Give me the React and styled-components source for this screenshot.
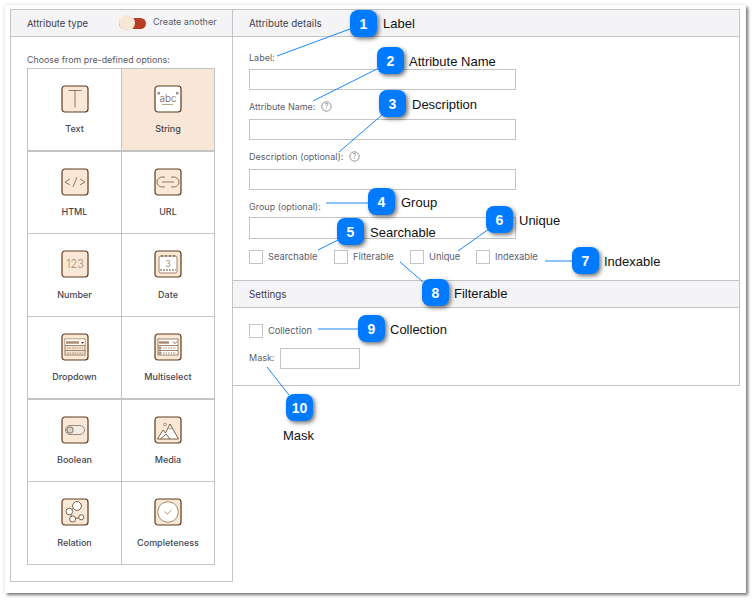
import React from "react"
import styled, { createGlobalStyle } from "styled-components"

const GlobalStyle = createGlobalStyle`
  html, body { margin: 0; padding: 0; background: #fff; }
  body { font-family: "Inter", "Liberation Sans", sans-serif; }
`

const Page = styled.div`
  position: relative;
  width: 754px;
  height: 602px;
  overflow: hidden;
  background: #fff;
`

const Sheet = styled.div`
  display: flex;
  align-items: flex-start;
  box-sizing: border-box;
  width: 741px;
  height: 588px;
  margin: 5px 0 0 5px;
  padding: 4px 0 0 5px;
  background: #fff;
  box-shadow: 2px 2px 3px rgba(0, 0, 0, 0.55), -1px -1px 3px rgba(0, 0, 0, 0.08);
`

const LeftPanel = styled.section`
  box-sizing: border-box;
  width: 223px;
  height: 573px;
  border: 1px solid #c4c4c4;
`

const RightPanel = styled.section`
  box-sizing: border-box;
  width: 508px;
  height: 377px;
  margin-left: -1px;
  border: 1px solid #c4c4c4;
`

const PanelHeader = styled.header`
  display: flex;
  align-items: center;
  box-sizing: border-box;
  height: ${p => p.$h || 27}px;
  margin-top: ${p => p.$mt || 0}px;
  padding-left: 16px;
  background: #f4f4f6;
  border-bottom: 1px solid #c4c4c4;
  border-top: ${p => (p.$ruled ? "1px solid #c4c4c4" : "0")};
  font-size: ${p => p.$size || 9.8}px;
  color: #3d3d4d;
`

const Toggle = styled.span`
  position: relative;
  width: 27px;
  height: 11px;
  margin-left: 31px;
  border-radius: 6px;
  background: #b83c22;
  &::before {
    content: "";
    position: absolute;
    left: 0;
    top: -3px;
    width: 16px;
    height: 16px;
    border-radius: 50%;
    background: #f8e7d6;
  }
`

const ToggleText = styled.span`
  margin: -3px 0 0 7px;
  font-size: 9px;
  color: #5a5a68;
`

const LeftBody = styled.div`
  padding: 16px 16px 0;
`

const Hint = styled.div`
  height: 15px;
  font-size: 8.9px;
  line-height: 13px;
  color: #5a5a68;
`

const TypeGrid = styled.div`
  display: grid;
  grid-template-columns: 94px 92px;
  grid-template-rows: 83px 82px 83px 83px 82px 83px;
  box-sizing: border-box;
  width: 188px;
  border: 1px solid #c4c4c4;
  border-bottom: 0;
`

const TypeCell = styled.div`
  display: flex;
  flex-direction: column;
  align-items: center;
  box-sizing: border-box;
  padding-top: 16px;
  background: ${p => (p.$active ? "#f8e7d6" : "#fff")};
  border-bottom: ${p => (p.$heavy ? 2 : 1)}px solid #c4c4c4;
  border-right: ${p => (p.$last ? 0 : 1)}px solid #c4c4c4;
  font-size: 9px;
  font-weight: 500;
  color: #45454f;
`

const TypeName = styled.span`
  margin-top: ${p => (p.$low ? 1 : 0)}px;
`

const IconBox = styled.svg`
  display: block;
  width: 28px;
  height: 28px;
  margin-bottom: 10px;
`

const Form = styled.div`
  padding: 12px 16px 0;
`

const FieldLabel = styled.label`
  display: flex;
  align-items: center;
  gap: 6px;
  height: 16px;
  font-size: 9px;
  color: #5e5e6a;
`

const TextInput = styled.div`
  box-sizing: border-box;
  width: 267px;
  height: ${p => p.$h || 21}px;
  margin: ${p => p.$before || 5}px 0 ${p => p.$after || 8}px;
  border: 1px solid #c4c4c4;
  background: #fff;
`

const CheckRow = styled.div`
  display: flex;
  align-items: center;
  height: 14px;
`

const CheckItem = styled.span`
  display: flex;
  align-items: center;
  gap: 5px;
  width: ${p => p.$w}px;
  font-size: 9.3px;
  color: #5a6070;
`

const CheckText = styled.span`
  margin-top: -1px;
`

const CheckBox = styled.span`
  box-sizing: border-box;
  width: 14px;
  height: 14px;
  border: 1px solid #c4c4c4;
  background: #fff;
`

const SettingsBody = styled.div`
  padding: 16px 16px 0;
`

const MaskRow = styled.div`
  display: flex;
  gap: 6px;
  margin-top: 10px;
  font-size: 9px;
  color: #5e5e6a;
  line-height: 20px;
`

const MaskInput = styled.div`
  box-sizing: border-box;
  width: 80px;
  height: 21px;
  border: 1px solid #c4c4c4;
`

const LeaderLines = styled.svg`
  position: absolute;
  left: 0;
  top: 0;
  pointer-events: none;
`

const Badge = styled.div`
  position: absolute;
  left: ${p => p.$x}px;
  top: ${p => p.$y}px;
  display: flex;
  align-items: center;
  justify-content: center;
  width: 27px;
  height: 27px;
  border-radius: 8px;
  background: #007bff;
  box-shadow: 2px 2px 4px rgba(0, 0, 0, 0.55);
  font-family: "Liberation Sans", Arial, sans-serif;
  font-size: 14px;
  font-weight: 700;
  color: #fff;
`

const BadgeText = styled.div`
  position: absolute;
  left: ${p => p.$x}px;
  top: ${p => p.$y - 7}px;
  height: 16px;
  line-height: 16px;
  font-family: "Liberation Sans", Arial, sans-serif;
  font-size: 13px;
  color: #111;
  white-space: nowrap;
`

const BROWN = "#5e3a1c"
const SOFT = "#a98a70"
const LINE = "#8a6a50"
const FILL = "#f9e8d6"

const IconFrame = ({ fill = FILL, children }) => (
  <IconBox viewBox="0 0 28 28">
    <rect x="1" y="1" width="26" height="26" rx="3" fill={fill} stroke={BROWN} strokeWidth="1.2" />
    {children}
  </IconBox>
)

const SvgLabel = styled.text`
  font-family: "Inter", "Liberation Sans", sans-serif;
  font-weight: 300;
  fill: ${p => p.$color || SOFT};
`

const icons = {
  Text: (
    <IconFrame>
      <path d="M7.5 5.5h13M14 5.5v17" fill="none" stroke={LINE} strokeWidth="0.9" />
    </IconFrame>
  ),
  String: (
    <IconFrame fill="#fff">
      <SvgLabel x="14" y="17" fontSize="10" textAnchor="middle" $color="#6f5848">abc</SvgLabel>
      <path d="M3.5 7h2.5v2.5H3.5zM22 7h2.5v2.5H22z" fill="#a09088" />
      <path d="M8 19.5h11" stroke={SOFT} strokeWidth="0.8" />
    </IconFrame>
  ),
  HTML: (
    <IconFrame>
      <path d="M9 11l-5 3 5 3M19 11l5 3-5 3M16 9l-4 10" fill="none" stroke={LINE} strokeWidth="0.9" />
    </IconFrame>
  ),
  URL: (
    <IconFrame>
      <path d="M11 9H8a5 5 0 0 0 0 10h3M17 9h3a5 5 0 0 1 0 10h-3M8 14h12" fill="none" stroke={LINE} strokeWidth="0.9" />
    </IconFrame>
  ),
  Number: (
    <IconFrame>
      <SvgLabel x="14" y="18" fontSize="11" textAnchor="middle">123</SvgLabel>
    </IconFrame>
  ),
  Date: (
    <IconFrame>
      <rect x="5" y="6" width="18" height="17" rx="2" fill="#fff" stroke={LINE} strokeWidth="0.8" />
      <path d="M8 5v2M12 5v2M16 5v2M20 5v2" stroke={BROWN} strokeWidth="1" />
      <SvgLabel x="14" y="17" fontSize="9" textAnchor="middle" $color={LINE}>3</SvgLabel>
      <path d="M6 20h16" stroke={SOFT} strokeWidth="1.4" strokeDasharray="2 1" />
    </IconFrame>
  ),
  Dropdown: (
    <IconFrame>
      <rect x="4" y="6" width="20" height="16" fill="#f6e4d2" stroke={LINE} strokeWidth="0.8" />
      <rect x="4.4" y="6.4" width="19.2" height="6" fill="#fff" />
      <path d="M5 9.5h13" stroke={SOFT} strokeWidth="2.4" />
      <path d="M20 9l1.5 2 1.5-2z" fill={BROWN} />
      <path d="M4 12.5h20M4 17.5h20" stroke={LINE} strokeWidth="0.8" />
      <path d="M6 15h16M6 20h16" stroke={SOFT} strokeWidth="1" strokeDasharray="1.5 1" />
    </IconFrame>
  ),
  Multiselect: (
    <IconFrame>
      <rect x="4" y="6" width="20" height="16" fill="#fff" stroke={LINE} strokeWidth="0.8" />
      <path d="M5 9.5h10" stroke={SOFT} strokeWidth="2.4" />
      <path d="M19 8.5l2 2 2-2" fill="none" stroke={BROWN} strokeWidth="0.8" />
      <path d="M4 12.5h20M4 17.5h20" stroke={LINE} strokeWidth="0.8" />
      <circle cx="6" cy="15" r="1.2" fill="#fff" stroke={BROWN} strokeWidth="0.7" />
      <circle cx="6" cy="20" r="1.2" fill="#fff" stroke={BROWN} strokeWidth="0.7" />
      <path d="M9 15h13M9 20h13" stroke={SOFT} strokeWidth="1" strokeDasharray="1.5 1" />
    </IconFrame>
  ),
  Boolean: (
    <IconFrame>
      <rect x="4.5" y="9.5" width="19" height="9" rx="4.5" fill="#f1ebe5" stroke="#8f8275" strokeWidth="0.9" />
      <circle cx="9" cy="14" r="3.2" fill="#ddd2c6" stroke="#7a6a5c" strokeWidth="0.9" />
    </IconFrame>
  ),
  Media: (
    <IconFrame>
      <path d="M3.5 23L9 14l2.5 3L16 8l8.5 15z" fill="#fff" stroke="#6f4f36" strokeWidth="0.9" />
      <path d="M6.5 23l5.5-5 4 5" fill="none" stroke="#6f4f36" strokeWidth="0.9" />
      <path d="M14 11.5l2 1.5 2-1" fill="none" stroke="#8a6a50" strokeWidth="0.7" />
      <circle cx="11" cy="8.5" r="1.4" fill="none" stroke={LINE} strokeWidth="0.7" />
    </IconFrame>
  ),
  Relation: (
    <IconFrame>
      <path d="M16 8L8.3 13.5l3.4 7.5 8.6-1.7" fill="none" stroke="#6f4f36" strokeWidth="0.9" />
      <circle cx="16" cy="8" r="4.4" fill="#fff" stroke="#6f4f36" strokeWidth="0.9" />
      <circle cx="8.3" cy="13.5" r="3.3" fill="#fff" stroke="#6f4f36" strokeWidth="0.9" />
      <circle cx="11.7" cy="21" r="3" fill="#fff" stroke="#6f4f36" strokeWidth="0.9" />
      <circle cx="20.3" cy="19.3" r="2.5" fill="#fff" stroke="#6f4f36" strokeWidth="0.9" />
    </IconFrame>
  ),
  Completeness: (
    <IconFrame>
      <circle cx="14" cy="14" r="10.3" fill="#fff" stroke="#9a8068" strokeWidth="0.9" />
      <path d="M10.5 13.5l2.8 2.5 4.2-4" fill="none" stroke={SOFT} strokeWidth="0.9" />
    </IconFrame>
  ),
}

const typeRows = [
  ["Text", "String"],
  ["HTML", "URL"],
  ["Number", "Date"],
  ["Dropdown", "Multiselect"],
  ["Boolean", "Media"],
  ["Relation", "Completeness"],
]

const HelpIcon = () => (
  <svg width="11" height="11" viewBox="0 0 11 11">
    <circle cx="5.5" cy="5.5" r="4.7" fill="none" stroke="#77777f" strokeWidth="0.8" />
    <SvgLabel x="5.5" y="8" fontSize="7" textAnchor="middle" $color="#666670">?</SvgLabel>
  </svg>
)

const callouts = [
  { n: 1, x: 350, y: 10, label: "Label", tx: 383, ty: 23 },
  { n: 2, x: 377, y: 47, label: "Attribute Name", tx: 409, ty: 61 },
  { n: 3, x: 379, y: 90, label: "Description", tx: 412, ty: 104 },
  { n: 4, x: 368, y: 188, label: "Group", tx: 401, ty: 202 },
  { n: 5, x: 337, y: 218, label: "Searchable", tx: 370, ty: 232 },
  { n: 6, x: 486, y: 206, label: "Unique", tx: 519, ty: 220 },
  { n: 7, x: 572, y: 247, label: "Indexable", tx: 604, ty: 261 },
  { n: 8, x: 422, y: 279, label: "Filterable", tx: 454, ty: 293 },
  { n: 9, x: 358, y: 315, label: "Collection", tx: 390, ty: 329 },
  { n: 10, x: 286, y: 394, label: "Mask", tx: 283, ty: 435 },
]

const leaders = [
  [350, 29, 277, 56],
  [377, 69, 313, 101],
  [382, 115, 339, 152],
  [368, 203, 326, 203],
  [338, 240, 318, 250],
  [489, 229, 458, 251],
  [572, 261, 545, 261],
  [423, 282, 400, 262],
  [358, 329, 318, 329],
  [289, 395, 267, 367],
]

const App = () => (
  <Page>
    <GlobalStyle />
    <Sheet>
      <LeftPanel>
        <PanelHeader $size={9.5}>
          Attribute type
          <Toggle />
          <ToggleText>Create another</ToggleText>
        </PanelHeader>
        <LeftBody>
          <Hint>Choose from pre-defined options:</Hint>
          <TypeGrid>
            {typeRows.map((row, r) =>
              row.map((name, c) => (
                <TypeCell key={name} $active={name === "String"} $heavy={r === 0 || r === 3} $last={c === 1}>
                  {icons[name]}
                  <TypeName $low={r === 2 || r === 5}>{name}</TypeName>
                </TypeCell>
              ))
            )}
          </TypeGrid>
        </LeftBody>
      </LeftPanel>
      <RightPanel>
        <PanelHeader>Attribute details</PanelHeader>
        <Form>
          <FieldLabel>Label:</FieldLabel>
          <TextInput $before={4} />
          <FieldLabel>Attribute Name: <HelpIcon /></FieldLabel>
          <TextInput />
          <FieldLabel>Description (optional): <HelpIcon /></FieldLabel>
          <TextInput />
          <FieldLabel>Group (optional):</FieldLabel>
          <TextInput $before={3} $h={22} $after={11} />
          <CheckRow>
            <CheckItem $w={85}><CheckBox /><CheckText>Searchable</CheckText></CheckItem>
            <CheckItem $w={76}><CheckBox /><CheckText>Filterable</CheckText></CheckItem>
            <CheckItem $w={66}><CheckBox /><CheckText>Unique</CheckText></CheckItem>
            <CheckItem $w={70}><CheckBox /><CheckText>Indexable</CheckText></CheckItem>
          </CheckRow>
        </Form>
        <PanelHeader $ruled $h={28} $mt={16}>Settings</PanelHeader>
        <SettingsBody>
          <CheckRow>
            <CheckItem $w={85}><CheckBox /><CheckText>Collection</CheckText></CheckItem>
          </CheckRow>
          <MaskRow>Mask:<MaskInput /></MaskRow>
        </SettingsBody>
      </RightPanel>
    </Sheet>
    <LeaderLines width="754" height="602">
      {leaders.map(([x1, y1, x2, y2]) => (
        <line key={`${x1}-${y1}`} x1={x1} y1={y1} x2={x2} y2={y2} stroke="#1a86f0" strokeWidth="1" />
      ))}
    </LeaderLines>
    {callouts.map(c => (
      <React.Fragment key={c.n}>
        <Badge $x={c.x} $y={c.y}>{c.n}</Badge>
        <BadgeText $x={c.tx} $y={c.ty}>{c.label}</BadgeText>
      </React.Fragment>
    ))}
  </Page>
)

export default App
